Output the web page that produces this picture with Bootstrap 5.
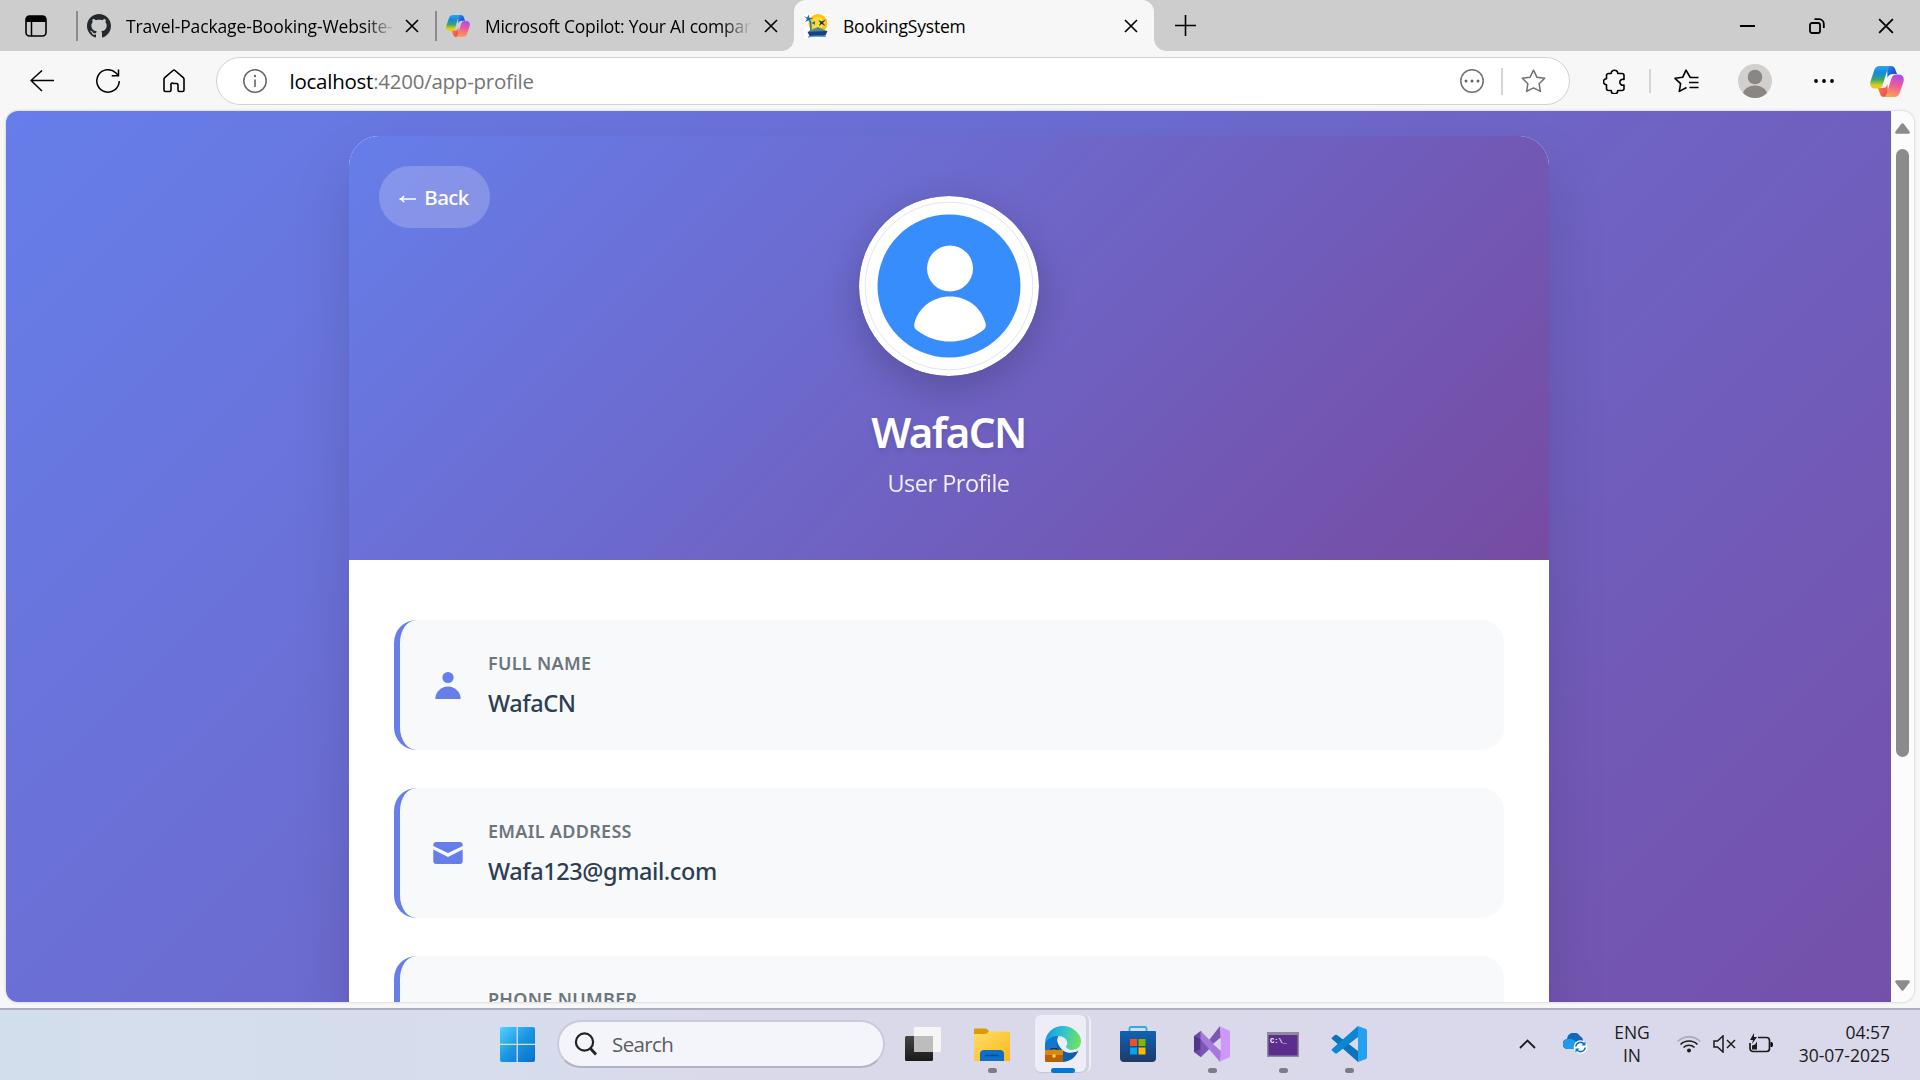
<!DOCTYPE html>
<html lang="en">
<head>
<meta charset="utf-8">
<title>BookingSystem</title>
<link href="https://cdn.jsdelivr.net/npm/bootstrap@5.3.0/dist/css/bootstrap.min.css" rel="stylesheet">
<style>
body{width:1920px;height:1080px;overflow:hidden;font-family:"Open Sans","Noto Sans",sans-serif;color:#000;background:#f7f7f7}
svg{display:block;flex:none}
/* tab strip */
.tabstrip{height:51px;background:#cdcdcd}
.ws-btn{width:76px;padding-left:25px}
.tab{height:51px;font-size:17.5px}
.tab-sep{width:1.5px;height:30px;background:#8b8b8b}
.tab-title{white-space:nowrap;overflow:hidden;line-height:30px}
.fade-end{-webkit-mask-image:linear-gradient(90deg,#000 calc(100% - 30px),transparent);mask-image:linear-gradient(90deg,#000 calc(100% - 30px),transparent)}
.tab-one{width:357.5px;padding-left:9.5px}
.tab-one .tab-title{width:269px;margin-left:15px;letter-spacing:-.13px}
.tab-two{width:357.5px;padding-left:9.5px}
.tab-two .tab-title{width:267px;margin-left:15px;letter-spacing:-.27px}
.tab-current{width:360px;height:51px;background:#f7f7f7;border-radius:12px 12px 0 0;padding-left:10px;position:relative}
.tab-current .tab-title{width:272px;margin-left:15px;letter-spacing:-.2px}
.tab-current::before,.tab-current::after{content:"";position:absolute;bottom:0;width:12px;height:12px}
.tab-current::before{left:-12px;background:radial-gradient(circle at 0 0,transparent 11.5px,#f7f7f7 12px)}
.tab-current::after{right:-12px;background:radial-gradient(circle at 100% 0,transparent 11.5px,#f7f7f7 12px)}
.tab-close{margin-left:auto;margin-right:16px}
.win-btn{width:69px}
/* toolbar */
.toolbar{height:60px;padding-left:9px}
.tool{width:66px}
.address{width:1354px;height:48px;margin-left:9px;border:1.5px solid #d2d2d2;border-radius:24px;background:#fff;padding-left:26px;padding-right:23px}
.url{font-size:20.5px;letter-spacing:-.25px;margin-left:22.5px;color:#757575;line-height:30px}
.vline{width:2px;background:#d4d4d4}
/* page */
.page-frame{height:897px;padding:0 6px 6px}
.viewport{height:891px;border-radius:12px;overflow:hidden;background:#fcfcfc;box-shadow:0 0 2px 1px #dedede}
.page-bg{width:1885px;height:1210px;padding-top:25px;background:linear-gradient(135deg,#667eea 0%,#764ba2 100%)}
.profile{width:1200px;height:1120px;border-radius:30px;overflow:hidden;background:#fff}
.profile-wrap{width:1200px;border-radius:30px;box-shadow:0 30px 60px rgba(0,0,0,.13)}
.profile-head{height:424px;padding-top:60px;background:linear-gradient(135deg,#667eea 0%,#764ba2 100%);position:relative;color:#fff}
.back-btn{position:absolute;left:30px;top:30px;width:111px;height:62px;border-radius:31px;background:rgba(255,255,255,.2);color:#fff;font:500 20.5px "Noto Sans",sans-serif;letter-spacing:-.6px;border:0;padding:0}
.avatar{width:180px;height:180px;border-radius:50%;box-shadow:0 12px 38px rgba(0,0,0,.2)}
.user-name{font:600 42px/50px "Noto Sans",sans-serif;letter-spacing:-1.6px;margin:31px 0 0;text-shadow:0 3px 6px rgba(0,0,0,.1)}
.user-role{font-size:23.5px;line-height:36px;letter-spacing:-.5px;margin:8px 0 0;opacity:.9}
.profile-body{padding:60px 45px;gap:38px}
.info{height:130px;background:#f8f9fb;border-left:6px solid #667eea;border-radius:22.5px;padding-left:30px}
.info-icon{width:36px}
.info-text{margin-left:22.5px;font-family:"Noto Sans",sans-serif}
.info-label{font-size:18px;font-weight:600;line-height:27px;letter-spacing:.3px;color:#6c757d}
.info-value{font-size:23.5px;font-weight:500;line-height:34px;letter-spacing:-.42px;color:#2c3e50;margin-top:9px}
.scroller{width:23px;padding:12px 0 11px}
.thumb{width:13px;height:608px;border-radius:7px;background:#8b8b8b;margin-top:15px}
/* taskbar */
.taskbar{height:72px;display:grid;grid-template-columns:482px 71px 336px 68px 70px 71px 80px 68px 74px 58px 1fr 44px 52px 62px 124px 133px;border-top:2px solid #adafbf;background:linear-gradient(90deg,#d3deed 0,#d6ddec 500px,#dad9ea 720px,#dad9eb 100%);color:#1b1b1b}
.taskbar>div{display:flex;align-items:center;justify-content:center;position:relative;padding-bottom:2px}
.search{height:48px;border-radius:24px;background:#f4f5fa;border:2px solid #c9cbdd;border-bottom-color:#b0b3c5;padding-left:15px;color:#5c5c62;font-size:20.5px;letter-spacing:-.6px}
.search span{margin-left:15px;line-height:28px}
.running::after{content:"";position:absolute;bottom:7px;left:50%;margin-left:-4.5px;width:9px;height:5px;border-radius:2.5px;background:#7d7b87}
.edge-tile{width:51px;height:57px;padding-left:5px;border-radius:6px;background:#ecedf6;box-shadow:0 1px 1px #c5c4d6}
.edge-stack{width:56px;height:57px;border-radius:6px;border-right:2px solid #eeeef7;background:#d3d2e4;margin-bottom:1px}
.edge-on::after{content:"";position:absolute;bottom:7px;left:24px;width:24px;height:5px;border-radius:2.5px;background:#0078d4}
.tray{font-size:17.5px;line-height:23.5px}
.clock{padding-right:30px}
</style>
</head>
<body class="d-flex flex-column">
<svg width="0" height="0" class="position-absolute">
 <defs>
  <linearGradient id="cpA" x1="0" y1="0" x2="0" y2="1"><stop offset="0" stop-color="#28a8ea"/><stop offset=".3" stop-color="#1686df"/><stop offset=".6" stop-color="#39a86b"/><stop offset=".85" stop-color="#dfca1e"/><stop offset="1" stop-color="#f9c80a"/></linearGradient>
  <linearGradient id="cpB" x1=".6" y1="0" x2=".4" y2="1"><stop offset="0" stop-color="#a64ff0"/><stop offset=".45" stop-color="#ee5a9a"/><stop offset="1" stop-color="#ffa04e"/></linearGradient>
  <linearGradient id="cpC" x1="0" y1="0" x2="1" y2="1"><stop offset="0" stop-color="#1e90f0"/><stop offset="1" stop-color="#1a35c0"/></linearGradient>
  <linearGradient id="cpD" x1="0" y1="0" x2="1" y2="1"><stop offset="0" stop-color="#ff8b35"/><stop offset="1" stop-color="#e8405a"/></linearGradient>
  <linearGradient id="wn" x1="0" y1="0" x2="1" y2="1"><stop offset="0" stop-color="#4fd3ff"/><stop offset=".5" stop-color="#1c95e2"/><stop offset="1" stop-color="#0670cc"/></linearGradient>
  <linearGradient id="fo" x1="0" y1="0" x2="1" y2="1"><stop offset="0" stop-color="#ffdc6b"/><stop offset="1" stop-color="#fbb917"/></linearGradient>
  <linearGradient id="ed" x1="0" y1=".3" x2="1" y2=".5"><stop offset="0" stop-color="#1797e0"/><stop offset=".45" stop-color="#2fc0d6"/><stop offset="1" stop-color="#6fe35a"/></linearGradient>
  <linearGradient id="st" x1="0" y1="0" x2="0" y2="1"><stop offset="0" stop-color="#0f62b4"/><stop offset="1" stop-color="#1f3a68"/></linearGradient>
  <linearGradient id="dk" x1="0" y1="0" x2="0" y2="1"><stop offset="0" stop-color="#444"/><stop offset="1" stop-color="#1a1a1a"/></linearGradient>
  <symbol id="copilot" viewBox="0 0 34 31">
   <path fill="url(#cpC)" d="M17 0h4c2.4 0 3.700 1.500 4.300 3.500L27 8h-4c-3 0-4.500 1-5.500 4z"/>
   <path fill="url(#cpD)" d="M8 22h5c2.500 0 3.500-1 4.500-4L18 31h-4c-2 0-3.400-1.200-4-3.300z"/>
   <path fill="url(#cpA)" d="M10 0h11c-2.300.5-3.300 2.600-4 5l-4 13c-1 3.300-2.400 4.500-5.500 4.500H5C1 22.500-.6 19 .6 15L4 5C5 1.800 6.500 0 10 0z"/>
   <path fill="url(#cpB)" d="M24 31H13.500c2.200-.6 3-2.600 3.700-5l4-13c1-3.300 2.400-4.500 5.500-4.500H29c4 0 5.600 3.500 4.400 7.500L30 26c-1 3.200-2.500 5-6 5z"/>
  </symbol>
  <symbol id="cross" viewBox="0 0 14 14"><path d="M1 1l12 12M13 1L1 13" stroke="#000" stroke-width="1.600" fill="none"/></symbol>
 </defs>
</svg>

<header class="tabstrip d-flex align-items-start">
 <div class="ws-btn d-flex align-items-center h-100">
  <svg width="22" height="22" viewBox="0 0 22 22"><rect x="1" y="1" width="20" height="20" rx="3.500" fill="none" stroke="#000" stroke-width="1.600"/><path d="M1 7V4a3 3 0 013-3h14a3 3 0 013 3v3z"/><path d="M6.500 7v14" stroke="#000" stroke-width="1.500"/></svg>
 </div>
 <div class="tab d-flex align-items-center"><div class="tab-sep"></div></div>
 <div class="tab tab-one d-flex align-items-center">
  <svg width="24" height="24" viewBox="0 0 16 16"><path fill="#24292f" d="M8 0C3.580 0 0 3.580 0 8c0 3.540 2.290 6.530 5.470 7.590.4.070.55-.17.55-.38 0-.19-.01-.82-.01-1.490-2.010.37-2.530-.49-2.690-.94-.09-.23-.48-.94-.82-1.130-.28-.15-.68-.52-.01-.53.63-.01 1.080.58 1.230.82.72 1.210 1.870.87 2.330.66.070-.52.28-.87.51-1.070-1.780-.2-3.640-.89-3.640-3.950 0-.87.31-1.590.82-2.150-.08-.2-.36-1.020.08-2.120 0 0 .67-.21 2.200.82.64-.18 1.320-.27 2-.27s1.360.09 2 .27c1.530-1.040 2.200-.82 2.200-.82.44 1.100.16 1.920.08 2.120.51.56.82 1.270.82 2.150 0 3.070-1.870 3.750-3.650 3.950.29.25.54.73.54 1.480 0 1.070-.01 1.930-.01 2.200 0 .21.15.46.55.38A8.010 8.010 0 0016 8c0-4.420-3.580-8-8-8z"/></svg>
  <div class="tab-title fade-end">Travel-Package-Booking-Website-</div>
  <svg class="tab-close" width="14" height="14"><use href="#cross"/></svg>
 </div>
 <div class="tab d-flex align-items-center"><div class="tab-sep"></div></div>
 <div class="tab tab-two d-flex align-items-center">
  <svg width="24" height="22"><use href="#copilot"/></svg>
  <div class="tab-title fade-end">Microsoft Copilot: Your AI companion</div>
  <svg class="tab-close" width="14" height="14"><use href="#cross"/></svg>
 </div>
 <div class="tab tab-current d-flex align-items-center">
  <svg width="24" height="24" viewBox="0 0 24 24"><rect width="24" height="24" fill="#fff"/><circle cx="14" cy="9.500" r="9.500" fill="#ffc414"/><circle cx="14" cy="9" r="6" fill="#ffdb3a"/><path d="M6 7c1 3 1 7 .5 11" stroke="#1e78b4" stroke-width="1.400" fill="none"/><path d="M0 2l3 1.500L5 .5l.3 3.200L9.500 4 6 5.500 7.500 9 4.500 6.500 1 8l2-3zM6 8l2 .8L11 7v4z" fill="#1e6eaa"/><path d="M14.500 6l3 1.500L22 5.500l-3 3.200 2.500 3.300-3.700-2L15 12l1.200-3.300z" fill="#14366e"/><path d="M5 17l9-4 9 4-1 2H4z" fill="#4d8a92"/><path d="M3.500 17.800l20-.8-2 4.500c-5 1-11 1-16 .5z" fill="#193f88"/><path d="M4 23c6-1.500 12-1 18-.5" stroke="#5ba6cb" fill="none" stroke-width="1.300"/></svg>
  <div class="tab-title">BookingSystem</div>
  <svg class="tab-close" width="14" height="14"><use href="#cross"/></svg>
 </div>
 <div class="d-flex align-items-center h-100" style="padding-left:21px"><svg width="21" height="21" viewBox="0 0 21 21"><path d="M10.500 0v21M0 10.500h21" stroke="#000" stroke-width="1.600"/></svg></div>
 <div class="ms-auto d-flex h-100">
  <div class="win-btn d-flex align-items-center justify-content-center"><svg width="15" height="2"><rect width="15" height="2"/></svg></div>
  <div class="win-btn d-flex align-items-center justify-content-center"><svg width="16" height="16" viewBox="0 0 16 16" fill="none" stroke="#000" stroke-width="1.800"><rect x="1" y="5" width="10" height="10" rx="2"/><path d="M5.500 1.200H10a4.800 4.800 0 014.800 4.800v4"/></svg></div>
  <div class="win-btn d-flex align-items-center justify-content-center"><svg width="16" height="16"><use href="#cross"/></svg></div>
 </div>
</header>

<nav class="toolbar d-flex align-items-center">
 <div class="tool d-flex justify-content-center"><svg width="24" height="22" viewBox="0 0 24 22" fill="none" stroke="#000" stroke-width="1.500"><path d="M24 10.500H1M12 .5L1 10.500l11 10.500"/></svg></div>
 <div class="tool d-flex justify-content-center"><svg width="24" height="24" viewBox="0 0 24 24" fill="none" stroke="#000" stroke-width="1.500"><path d="M23.200 12A11.200 11.200 0 1120 4.100l2.300 2.400M22.500.5v6.300h-6.800"/></svg></div>
 <div class="tool d-flex justify-content-center"><svg width="22" height="24" viewBox="0 0 22 24" fill="none" stroke="#000" stroke-width="1.600" stroke-linejoin="round"><path d="M1 10.200a2 2 0 01.7-1.500L10 1.500a1.500 1.500 0 012 0l8.300 7.200a2 2 0 01.7 1.500V21a1.500 1.500 0 01-1.500 1.500h-3a1.500 1.500 0 01-1.500-1.500V16a1.500 1.500 0 00-1.500-1.500h-3A1.500 1.500 0 008 16v5a1.500 1.500 0 01-1.500 1.500h-4A1.500 1.500 0 011 21z"/></svg></div>
 <div class="address d-flex align-items-center">
  <svg width="24" height="24" viewBox="0 0 24 24"><circle cx="12" cy="12" r="11.200" fill="none" stroke="#666" stroke-width="1.500"/><path d="M12 10.500v7.500" stroke="#666" stroke-width="1.600"/><circle cx="12" cy="7" r="1.200" fill="#666"/></svg>
  <div class="url"><span class="text-black">localhost</span>:4200/app-profile</div>
  <svg class="ms-auto" width="24" height="24" viewBox="0 0 24 24"><circle cx="12" cy="12" r="11.200" fill="none" stroke="#707070" stroke-width="1.500"/><g fill="#666"><circle cx="6" cy="12" r="1.500"/><circle cx="12" cy="12" r="1.500"/><circle cx="18" cy="12" r="1.500"/></g></svg>
  <div class="vline" style="height:27px;margin:0 18px 0 17px"></div>
  <svg width="25" height="24" viewBox="0 0 25 24" fill="none" stroke="#707070" stroke-width="1.500" stroke-linejoin="round"><path d="M12.500 1.200l3.400 7 7.800 1.100-5.600 5.400 1.300 7.700-6.900-3.600-6.900 3.600 1.300-7.700L1.300 9.300l7.800-1.100z"/></svg>
 </div>
 <div class="tool d-flex justify-content-center" style="margin-left:11px"><svg width="23" height="25" viewBox="0 0 23 25" fill="none" stroke="#000" stroke-width="1.600" stroke-linejoin="round"><path d="M5.500 4.500h2.700a3.300 3.300 0 016.600 0H19a2 2 0 012 2v4a3 3 0 100 5.500v3.500a2 2 0 01-2 2h-4.200a3.300 3.300 0 01-6.600 0H5.500a2 2 0 01-2-2v-3.700a3 3 0 010-6V6.500a2 2 0 012-2z"/></svg></div>
 <div class="vline" style="height:24px;margin:0 2px"></div>
 <div class="tool d-flex justify-content-center"><svg width="25" height="24" viewBox="0 0 25 24" fill="none" stroke="#000" stroke-width="1.600" stroke-linejoin="round"><path d="M24.500 8.500h-8.200L12 1.200 8.700 8.300 1 9.300l5.600 5.400-1.300 7.700L12.500 18.500M15 13.500h9.500M15.500 18.500h9"/></svg></div>
 <div class="tool d-flex justify-content-center" style="width:72px"><svg width="34" height="34" viewBox="0 0 34 34"><clipPath id="av"><circle cx="17" cy="17" r="17"/></clipPath><g clip-path="url(#av)"><rect width="34" height="34" fill="#d2d0ce"/><circle cx="17" cy="13" r="7.300" fill="#8a8684"/><ellipse cx="17" cy="32" rx="12.500" ry="10.500" fill="#8a8684"/></g></svg></div>
 <div class="tool d-flex justify-content-center"><svg width="20" height="4" viewBox="0 0 20 4"><circle cx="2" cy="2" r="1.900"/><circle cx="10" cy="2" r="1.900"/><circle cx="18" cy="2" r="1.900"/></svg></div>
 <div class="d-flex justify-content-center" style="width:60px"><svg width="34" height="31"><use href="#copilot"/></svg></div>
</nav>

<main class="page-frame">
 <div class="viewport d-flex">
  <div class="page-bg flex-shrink-0">
   <div class="profile-wrap mx-auto">
   <div class="profile">
    <section class="profile-head d-flex flex-column align-items-center">
     <button class="back-btn d-flex align-items-center justify-content-center"><svg class="me-2 mt-1" width="17" height="8" viewBox="0 0 17 8" fill="none" stroke="#fff"><path d="M1.500 4H17" stroke-width="1.300"/><path d="M5 .8Q3.800 3.200 1.500 4q2.300.8 3.500 3.200" stroke-width="1.500"/></svg>Back</button>
     <svg class="avatar" viewBox="0 0 180 180"><circle cx="90" cy="90" r="90" fill="#fff"/><circle cx="90" cy="90" r="83.800" fill="none" stroke="#c9c7ea" stroke-width=".5"/><circle cx="90" cy="90" r="71.500" fill="#378dfb"/><circle cx="91" cy="72.500" r="23" fill="#fff"/><path fill="#fff" d="M91 100.500c17 0 31 10.500 35.500 26.500.9 3.400 0 5.500-2.700 7.400C114 141.500 103 145.500 91 145.500s-23-4-32.800-11.100c-2.700-1.900-3.600-4-2.700-7.400C60 111 74 100.500 91 100.500z"/></svg>
     <h1 class="user-name">WafaCN</h1>
     <p class="user-role">User Profile</p>
    </section>
    <section class="profile-body d-flex flex-column">
     <div class="info d-flex align-items-center">
      <div class="info-icon d-flex justify-content-center"><svg width="26" height="28" viewBox="0 0 26 28" fill="#667eea"><circle cx="13" cy="6.500" r="5.600"/><path d="M.3 28C.3 21 6 15.500 13 15.500S25.700 21 25.700 28z"/></svg></div>
      <div class="info-text"><div class="info-label">FULL NAME</div><div class="info-value">WafaCN</div></div>
     </div>
     <div class="info d-flex align-items-center">
      <div class="info-icon d-flex justify-content-center"><svg width="30" height="22" viewBox="0 0 30 22" fill="#667eea"><path d="M.3 4V3a3 3 0 013-3h23.400a3 3 0 013 3v1L15 11zM.3 7.500L15 15l14.700-7.500V19a3 3 0 01-3 3H3.300a3 3 0 01-3-3z"/></svg></div>
      <div class="info-text"><div class="info-label">EMAIL ADDRESS</div><div class="info-value">Wafa123@gmail.com</div></div>
     </div>
     <div class="info d-flex align-items-center">
      <div class="info-icon"></div>
      <div class="info-text"><div class="info-label">PHONE NUMBER</div><div class="info-value">&nbsp;</div></div>
     </div>
    </section>
   </div>
   </div>
  </div>
  <div class="scroller d-flex flex-column align-items-center">
   <svg width="15" height="11" viewBox="0 0 15 11"><path d="M6 1.200q1.500-1.800 3 0l5.500 7.300q1 2-1 2.300h-12q-2-.3-1-2.300z" fill="#8b8b8b"/></svg>
   <div class="thumb"></div>
   <svg class="mt-auto" width="15" height="11" viewBox="0 0 15 11"><path d="M6 9.800q1.500 1.800 3 0l5.500-7.300q1-2-1-2.300h-12q-2 .3-1 2.300z" fill="#8b8b8b"/></svg>
  </div>
 </div>
</main>

<footer class="taskbar">
 <div></div>
 <div><svg width="35" height="35" viewBox="0 0 35 35"><rect width="35" height="35" rx="2" fill="url(#wn)"/><path d="M17.200 0v35M0 17.400h35" stroke="#d6ddec" stroke-width="1.300"/></svg></div>
 <div class="justify-content-start ps-1"><div class="search d-flex align-items-center flex-grow-1 me-1"><svg width="23" height="24" viewBox="0 0 23 24" fill="none" stroke="#222"><circle cx="10.500" cy="10" r="8.600" stroke-width="2.200"/><path d="M16 16l6 6.500" stroke-width="2.800"/></svg><span>Search</span></div></div>
 <div><svg width="36" height="34" viewBox="0 0 36 34"><rect y="9" width="28" height="25" rx="1.500" fill="url(#dk)"/><rect x="9" width="27" height="25" rx="1" fill="#f6f6f6"/><path d="M9 9h19v16H9z" fill="#bdbdbd"/></svg></div>
 <div class="running"><svg width="36" height="33" viewBox="0 0 36 33"><path d="M0 1.500Q0 .5 1 .5h10q1.500 0 2.500 1L15 3.500V8H0z" fill="#dc9b05"/><path d="M0 6h12l3-2.500h19.500A1.500 1.500 0 0136 5v28H0z" fill="url(#fo)"/><path d="M6 33v-7a4 4 0 014-4h16a4 4 0 014 4v7z" fill="#0f6fc5"/><path d="M11 27.500h14" stroke="#084d94" stroke-width="1.600"/></svg></div>
 <div class="edge-on"><div class="edge-stack"><div class="edge-tile d-flex align-items-center justify-content-center">
  <svg width="36" height="36" viewBox="0 0 36 36"><path fill="#0c60ab" d="M12 14c1 8 8 13 15 12 3 0 5-.5 6.500-1.500C31 31 25 36 17.500 36 8 36 3 29 3 22z"/><path fill="#1178cd" d="M0 18C1 11 8 8 14 9c-2 3-3 8-1 15v6L0 26z"/><path fill="url(#ed)" d="M0 18C0 7 8 0 18 0s18 8 18 15c0 6-4 9-9 9-4 0-6-2-6-3.500 0-1 1.200-1.500 1.200-3.500 0-4-4-7-9-7C7 10 2 13 0 18z"/><path fill="#ecedf6" d="M14.500 17c1-2.500 3.500-3 5.500-2.500 1.500 1 2.200 2 2.200 3 0 1.500-1.200 2-1.200 3 0 1.500 2 3.500 6 3.500 2.500 0 4.500-.7 6-1.700l.5 2c-3 2-7 3.200-11 2.200-4.500-1-8-4.500-8-9.500z"/><rect y="24" width="18" height="12" rx="1" fill="#b66207"/><path d="M0 24h18v5H0z" fill="#dd8412"/><rect x="7.500" y="28.500" width="3" height="3" fill="#ffd750"/><path d="M6 24v-1.500h6V24" stroke="#402309" fill="none"/></svg>
 </div></div></div>
 <div><svg width="36" height="36" viewBox="0 0 36 36"><path d="M9.500 8V2.500A1.500 1.500 0 0111 1h14a1.500 1.500 0 011.500 1.500V8" fill="none" stroke="#28afe8" stroke-width="1.800"/><path d="M0 6a1 1 0 011-1h34a1 1 0 011 1v26a4 4 0 01-4 4H4a4 4 0 01-4-4z" fill="url(#st)"/><path d="M10 13h7v7h-7z" fill="#f25022"/><path d="M18.500 13h7v7h-7z" fill="#7fba00"/><path d="M10 21.500h7v7h-7z" fill="#00a4ef"/><path d="M18.500 21.500h7v7h-7z" fill="#ffb900"/></svg></div>
 <div class="running"><svg width="36" height="36" viewBox="0 0 36 36"><path d="M0 10l6.500-5 1.500 1v24l-1.500 1L0 26z" fill="#6b4ca3"/><path d="M6.500 13v10L0 26V10z" fill="#52358b"/><path d="M6.500 13.500L12 18l14-18 1 12L8 30l-1.500 1V23z" fill="#7e57b4"/><path d="M26 36L6.500 13V5L28 26z" fill="#a678dc"/><path d="M25 0l11 5v26l-11 5 1.500-2V2z" fill="#cf97f8"/><path d="M26.500 11.500v13L19 18z" fill="#dad9ea"/></svg></div>
 <div class="running"><svg width="32" height="25" viewBox="0 0 32 25"><rect width="32" height="25" fill="#8e8a98"/><rect x="1.500" y="3" width="29" height="20.500" fill="#5b2d8e"/><text x="3" y="11" font-family="Liberation Mono" font-weight="700" font-size="7" fill="#fff">C:\_</text></svg></div>
 <div class="running"><svg width="36" height="36" viewBox="0 0 36 36"><path d="M1 11.500l3-2.500q1-.6 2 0L27 25v11L1 13q-1-1 0-1.500z" fill="#0b73b9"/><path d="M1 24.500l3 2.700q1 .6 2 0L27 11V0L1 23q-1 .8 0 1.500z" fill="#0a86d3"/><path d="M27 0l8 3q1 .5 1 1.800v26.400q0 1.300-1 1.800l-8 3z" fill="#25a0ee"/></svg></div>
 <div></div>
 <div><svg width="17" height="10" viewBox="0 0 17 10"><path d="M1 9l7.500-7.500L16 9" fill="none" stroke="#1b1b1b" stroke-width="1.800"/></svg></div>
 <div><svg width="25" height="22" viewBox="0 0 25 22"><path d="M5 16a5 5 0 01-1-10 7 7 0 0113-3 6 6 0 013 6l-4 7z" fill="#1068bd"/><path d="M0 11a5 5 0 015-5c4-1 8 2 14 8l-4 2H5a5 5 0 01-5-5z" fill="#229ae8"/><circle cx="17.500" cy="14" r="6.800" fill="#fff"/><path d="M12.800 13.500a4.800 4.800 0 018.500-2.300M22.200 14.500a4.800 4.800 0 01-8.500 2.300" fill="none" stroke="#1173c6" stroke-width="1.600"/><path d="M22.500 8.500v4h-4zM12.500 19.500v-4h4z" fill="#1173c6"/></svg></div>
 <div class="tray text-center">ENG<br>IN</div>
 <div class="justify-content-start" style="padding-left:14px">
  <svg width="24" height="17" viewBox="0 0 24 17" fill="none" stroke-width="1.600"><path d="M.7 5.500a16 16 0 0122.600 0" stroke="#aaa9b8"/><path d="M3.500 8.500a12 12 0 0117 0M6.500 11.500a8 8 0 0111 0" stroke="#1b1b1b" /><circle cx="12" cy="14.500" r="2" fill="#1b1b1b"/></svg>
  <svg style="margin-left:12px" width="23" height="18" viewBox="0 0 23 18" fill="none" stroke="#1b1b1b" stroke-width="1.500"><path d="M1 6h3.500l5.500-5v16l-5.500-5H1zM14 5l8 8M22 5l-8 8"/></svg>
  <svg style="margin:0 0 3px 13px" width="25" height="20" viewBox="0 0 25 20"><path d="M9 4.500h8.500a3 3 0 013 3v8a3 3 0 01-3 3H4a3 3 0 01-3-3V10" fill="none" stroke="#1b1b1b" stroke-width="1.700"/><path d="M21.500 9h1q1.500 0 1.500 2.500t-1.500 2.500h-1z"/><path d="M5 0L1 7h3l-1 4 5-7H5zM3 16.500v-4l3-1 2-3v8z" fill="#1b1b1b"/></svg>
 </div>
 <div class="tray clock text-end justify-content-end">04:57<br>30-07-2025</div>
</footer>
<script src="https://cdn.jsdelivr.net/npm/bootstrap@5.3.0/dist/js/bootstrap.bundle.min.js"></script>
</body>
</html>
